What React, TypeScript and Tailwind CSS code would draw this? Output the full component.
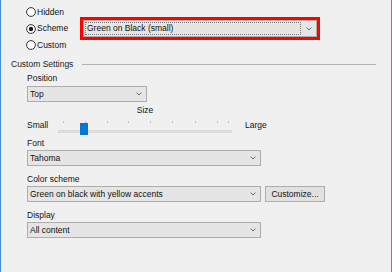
import React from "react";

const font = { fontFamily: '"Liberation Sans", Arial, sans-serif' };

function Chevron() {
  return (
    <svg width="6" height="4" viewBox="0 0 6 4" className="shrink-0">
      <polyline points="0.5,0.5 3,3 5.5,0.5" fill="none" stroke="#6d6d6d" strokeWidth="1" />
    </svg>
  );
}

function Radio({ label, checked }: { label: string; checked?: boolean }) {
  return (
    <div className="flex items-center gap-[1px]">
      <svg width="10" height="10" viewBox="0 0 10 10" className="shrink-0">
        <circle cx="5" cy="5" r="4.4" fill="#fff" stroke="#333" strokeWidth="1" />
        {checked && <circle cx="5" cy="5" r="2.2" fill="#1a1a1a" />}
      </svg>
      <span>{label}</span>
    </div>
  );
}

function Combo({ value, width }: { value: string; width: string }) {
  return (
    <div
      className={`${width} h-[16px] flex items-center justify-between border border-[#adadad] bg-[#e5e5e5] pl-[2px] pr-[4px]`}
    >
      <span className="leading-none">{value}</span>
      <Chevron />
    </div>
  );
}

function Label({ text, className = "" }: { text: string; className?: string }) {
  return <div className={`h-[12px] leading-[12px] ${className}`}>{text}</div>;
}

export default function App() {
  const ticks = [5, 27, 49, 70, 92, 114, 137, 159, 170];

  return (
    <div
      className="w-[392px] h-[272px] bg-[#f0f0f0] border-l border-r border-[#4a90d9] text-[8.5px] text-[#111] flex flex-col pt-[7px]"
      style={font}
    >
      <div className="pl-[25px] flex flex-col">
        <div className="h-[10px] flex items-center">
          <Radio label="Hidden" />
        </div>
        <div className="h-[23px] flex items-center">
          <div className="w-[54px]">
            <Radio label="Scheme" checked />
          </div>
          <div className="w-[240px] h-[23px] border-[3px] border-[#ff0000] flex">
            <div className="flex-1 flex items-center border border-[#adadad] bg-[#e5e5e5] pl-[1px] pr-[4px]">
              <div className="w-[216px] h-[13px] border border-dotted border-[#777] flex items-center pl-[1px] leading-none">
                Green on Black (small)
              </div>
              <div className="flex-1" />
              <Chevron />
            </div>
          </div>
        </div>
        <div className="h-[10px] flex items-center">
          <Radio label="Custom" />
        </div>
      </div>

      <div className="mt-[8px] h-[12px] flex items-center pl-[10px] pr-[15px]">
        <span className="text-[#222]">Custom Settings</span>
        <div className="flex-1 ml-[9px] h-px bg-[#b4b4b4]" />
      </div>

      <div className="pl-[26px] flex flex-col">
        <Label text="Position" className="mt-[2px]" />
        <div className="mt-[2px]">
          <Combo value="Top" width="w-[120px]" />
        </div>

        <div className="mt-[2px] w-[236px] h-[12px] leading-[12px] text-center">Size</div>

        <div className="h-[21px] flex items-start">
          <div className="w-[31px] mt-[3px] leading-[12px]">Small</div>
          <div className="relative w-[174px] h-[21px]">
            {ticks.map((x) => (
              <div key={x} className="absolute top-[5px] w-px h-[2px] bg-[#c2c2c2]" style={{ left: x }} />
            ))}
            <div className="absolute left-0 right-0 top-[14px] h-[3px] bg-[#e2e2e2] border border-[#d8d8d8]" />
            <div className="absolute left-[22px] top-[7px] w-[8px] h-[12px] bg-[#0078d7]" />
          </div>
          <div className="ml-[13px] mt-[3px] leading-[12px]">Large</div>
        </div>

        <Label text="Font" />
        <div className="mt-[1px]">
          <Combo value="Tahoma" width="w-[234px]" />
        </div>

        <Label text="Color scheme" className="mt-[7px]" />
        <div className="mt-[1px] flex gap-[4px]">
          <Combo value="Green on black with yellow accents" width="w-[234px]" />
          <div className="w-[60px] h-[16px] border border-[#adadad] bg-[#e1e1e1] flex items-center justify-center leading-none">
            Customize...
          </div>
        </div>

        <Label text="Display" className="mt-[7px]" />
        <div className="mt-[1px]">
          <Combo value="All content" width="w-[234px]" />
        </div>
      </div>
    </div>
  );
}
